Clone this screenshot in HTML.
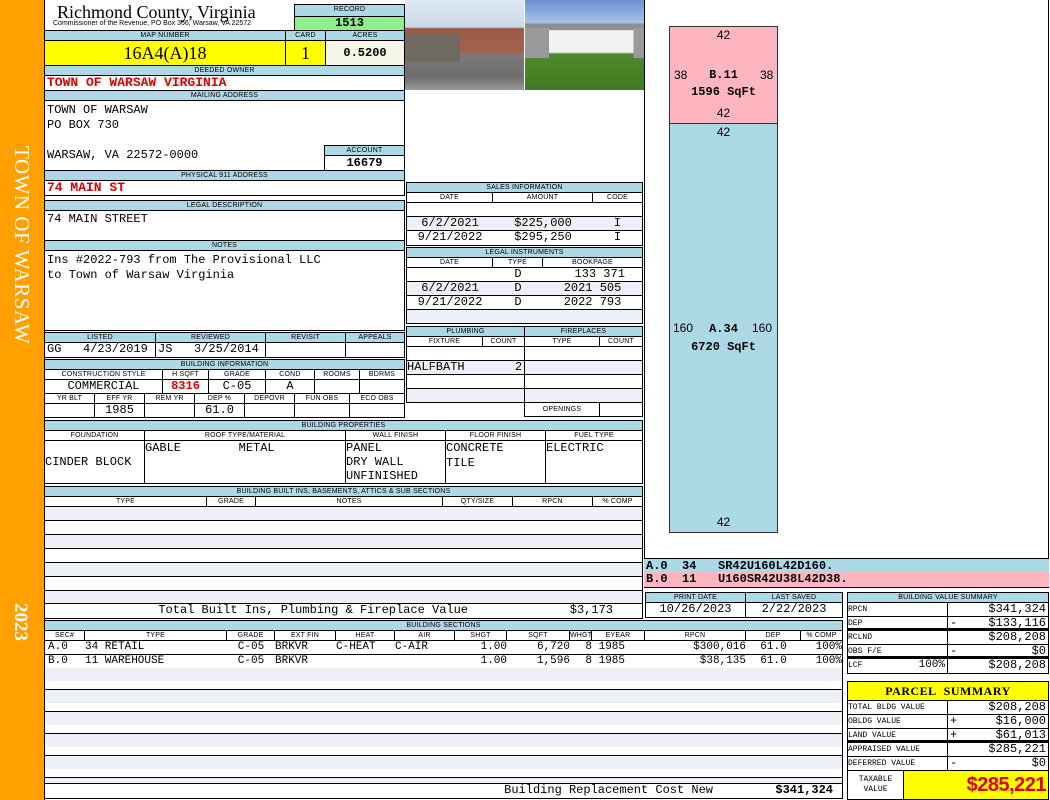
<!DOCTYPE html>
<html><head><meta charset="utf-8">
<style>
*{margin:0;padding:0;box-sizing:border-box}
body{width:1050px;height:800px;position:relative;background:#fff;overflow:hidden;font-family:"Liberation Mono",monospace;color:#000}
.a{position:absolute}
.row{position:absolute;display:flex;border:1px solid #000;background:#fff}
.row>div{border-right:1px solid #000;overflow:hidden;white-space:nowrap;flex:none}
.row>div:last-child{border-right:0;flex:1}
.hd{background:#add8e6;font:7px/9px "Liberation Sans",sans-serif;text-align:center;letter-spacing:.2px}
.m{font:12px/13px "Liberation Mono",monospace}
.s{font:11px/13px "Liberation Mono",monospace}
.c{text-align:center}.r{text-align:right}
.z{background:#eef0f8}
.red{color:#e00000;font-weight:bold}
.lbl{font:8px/13px "Liberation Mono",monospace}
</style></head><body>

<div class="a" style="left:0;top:0;width:44px;height:800px;background:#ffa000"></div>
<div class="a" style="left:9px;top:146px;writing-mode:vertical-rl;color:#fff;font:21px 'Liberation Serif',serif;letter-spacing:.5px">TOWN OF WARSAW</div>
<div class="a" style="left:9px;top:603px;writing-mode:vertical-rl;color:#fff;font:bold 19px 'Liberation Serif',serif">2023</div>
<div class="a" style="left:44px;top:0;width:1px;height:800px;background:#000"></div>

<div class="a" style="left:57px;top:2px;font:18px/20px 'Liberation Serif',serif">Richmond County, Virginia</div>
<div class="a" style="left:53px;top:20px;font:7px/8px 'Liberation Sans',sans-serif">Commissioner of the Revenue, PO Box 366, Warsaw, VA 22572</div>
<div class="row hd" style="left:294px;top:4px;width:111px;height:13px"><div>RECORD</div></div>
<div class="row" style="left:294px;top:16px;width:111px;height:15px;background:#90ee90;font:bold 12px/13px 'Liberation Mono';justify-content:center">1513</div>

<div class="row hd" style="left:44px;top:30px;width:361px;height:11px"><div style="width:241px">MAP NUMBER</div><div style="width:40px">CARD</div><div>ACRES</div></div>
<div class="row" style="left:44px;top:40px;width:361px;height:26px"><div style="width:241px;background:#ffff00;font:18px/24px 'Liberation Serif';text-align:center">16A4(A)18</div><div style="width:40px;background:#ffff00;font:18px/24px 'Liberation Serif';text-align:center">1</div><div style="background:#f6f6e6;font:bold 12px/24px 'Liberation Mono';text-align:center">0.5200</div></div>

<div class="row hd" style="left:44px;top:65px;width:361px;height:11px"><div>DEEDED OWNER</div></div>
<div class="row m red" style="left:44px;top:75px;width:361px;height:16px;padding-left:2px;font-size:13px">TOWN OF WARSAW VIRGINIA</div>
<div class="row hd" style="left:44px;top:90px;width:361px;height:11px"><div>MAILING ADDRESS</div></div>
<div class="row m" style="left:44px;top:100px;width:361px;height:71px;display:block;padding:2px 2px;line-height:15px">TOWN OF WARSAW<br>PO BOX 730<br><br>WARSAW, VA 22572-0000</div>
<div class="row hd" style="left:324px;top:145px;width:81px;height:11px"><div>ACCOUNT</div></div>
<div class="row" style="left:324px;top:155px;width:81px;height:16px;font:bold 12px/14px 'Liberation Mono';justify-content:center">16679</div>
<div class="row hd" style="left:44px;top:170px;width:361px;height:11px"><div>PHYSICAL 911 ADDRESS</div></div>
<div class="row m red" style="left:44px;top:180px;width:361px;height:16px;padding-left:2px;font-size:13px">74 MAIN ST</div>

<div class="row hd" style="left:44px;top:200px;width:361px;height:11px"><div>LEGAL DESCRIPTION</div></div>
<div class="row m" style="left:44px;top:210px;width:361px;height:31px;padding:2px">74 MAIN STREET</div>
<div class="row hd" style="left:44px;top:240px;width:361px;height:11px"><div>NOTES</div></div>
<div class="row m" style="left:44px;top:250px;width:361px;height:81px;display:block;padding:2px;line-height:15px">Ins #2022-793 from The Provisional LLC<br>to Town of Warsaw Virginia</div>

<div class="row hd" style="left:44px;top:332px;width:361px;height:11px"><div style="width:111px">LISTED</div><div style="width:110px">REVIEWED</div><div style="width:80px">REVISIT</div><div>APPEALS</div></div>
<div class="row m" style="left:44px;top:342px;width:361px;height:16px"><div style="width:111px;padding-left:2px">GG&nbsp;&nbsp;&nbsp;4/23/2019</div><div style="width:110px;padding-left:2px">JS&nbsp;&nbsp;&nbsp;3/25/2014</div><div style="width:80px"></div><div></div></div>

<div class="row hd" style="left:44px;top:359px;width:361px;height:11px"><div>BUILDING INFORMATION</div></div>
<div class="row hd" style="left:44px;top:369px;width:361px;height:11px;background:#fff"><div style="width:118px">CONSTRUCTION STYLE</div><div style="width:46px">H SQFT</div><div style="width:57px">GRADE</div><div style="width:49px">COND</div><div style="width:45px">ROOMS</div><div>BDRMS</div></div>
<div class="row m" style="left:44px;top:379px;width:361px;height:15px"><div class="c" style="width:118px">COMMERCIAL</div><div class="c red" style="width:46px">8316</div><div class="c" style="width:57px">C-05</div><div class="c" style="width:49px">A</div><div style="width:45px"></div><div></div></div>
<div class="row hd" style="left:44px;top:393px;width:361px;height:11px;background:#fff"><div style="width:50px">YR BLT</div><div style="width:50px">EFF YR</div><div style="width:50px">REM YR</div><div style="width:50px">DEP %</div><div style="width:50px">DEPOVR</div><div style="width:55px">FUN OBS</div><div>ECO OBS</div></div>
<div class="row m" style="left:44px;top:403px;width:361px;height:15px"><div style="width:50px"></div><div class="c" style="width:50px">1985</div><div style="width:50px"></div><div class="c" style="width:50px">61.0</div><div style="width:50px"></div><div style="width:55px"></div><div></div></div>

<div class="a" style="left:405px;top:0;width:119px;height:90px;background:linear-gradient(#dfe8f3 0,#c8d8ea 30%,#9b5a48 32%,#a4624f 58%,#7a7a7a 62%,#6d6d6d 85%,#999 100%)"></div>
<div class="a" style="left:405px;top:34px;width:55px;height:28px;background:#706a62"></div>
<div class="a" style="left:525px;top:0;width:119px;height:90px;background:linear-gradient(#6a8fd0 0,#a9c3e8 25%,#8e8e8e 27%,#8e8e8e 33%,#f2f2f2 34%,#f2f2f2 58%,#4f8a2e 60%,#3f7a22 100%)"></div>
<div class="a" style="left:525px;top:28px;width:119px;height:30px;background:linear-gradient(90deg,#9a9a9a 0,#9a9a9a 20%,transparent 20%,transparent 91%,#9a9a9a 91%)"></div>

<div class="row hd" style="left:406px;top:182px;width:237px;height:11px"><div>SALES INFORMATION</div></div>
<div class="row hd" style="left:406px;top:192px;width:237px;height:11px;background:#fff"><div style="width:86px">DATE</div><div style="width:100px">AMOUNT</div><div>CODE</div></div>
<div class="row m" style="left:406px;top:202px;width:237px;height:15px"></div>
<div class="row m z" style="left:406px;top:216px;width:237px;height:15px"><div class="c" style="width:86px;border:0">6/2/2021</div><div class="c" style="width:100px;border:0">$225,000</div><div class="c">I</div></div>
<div class="row m" style="left:406px;top:230px;width:237px;height:16px"><div class="c" style="width:86px;border:0">9/21/2022</div><div class="c" style="width:100px;border:0">$295,250</div><div class="c">I</div></div>

<div class="row hd" style="left:406px;top:247px;width:237px;height:11px"><div>LEGAL INSTRUMENTS</div></div>
<div class="row hd" style="left:406px;top:257px;width:237px;height:11px;background:#fff"><div style="width:86px">DATE</div><div style="width:50px">TYPE</div><div>BOOKPAGE</div></div>
<div class="row m" style="left:406px;top:267px;width:237px;height:15px"><div style="width:86px;border:0"></div><div class="c" style="width:50px;border:0">D</div><div class="c">&nbsp;&nbsp;133 371</div></div>
<div class="row m z" style="left:406px;top:281px;width:237px;height:15px"><div class="c" style="width:86px;border:0">6/2/2021</div><div class="c" style="width:50px;border:0">D</div><div class="c">2021 505</div></div>
<div class="row m" style="left:406px;top:295px;width:237px;height:15px"><div class="c" style="width:86px;border:0">9/21/2022</div><div class="c" style="width:50px;border:0">D</div><div class="c">2022 793</div></div>
<div class="row m z" style="left:406px;top:309px;width:237px;height:15px"></div>

<div class="row hd" style="left:406px;top:326px;width:237px;height:11px"><div style="width:118px">PLUMBING</div><div>FIREPLACES</div></div>
<div class="row hd" style="left:406px;top:336px;width:237px;height:11px;background:#fff"><div style="width:76px">FIXTURE</div><div style="width:42px">COUNT</div><div style="width:75px">TYPE</div><div>COUNT</div></div>
<div class="row" style="left:406px;top:346px;width:237px;height:15px"><div style="width:118px"></div><div></div></div>
<div class="row m z" style="left:406px;top:360px;width:237px;height:15px"><div style="width:118px">HALFBATH&nbsp;&nbsp;&nbsp;&nbsp;&nbsp;&nbsp;&nbsp;2</div><div></div></div>
<div class="row" style="left:406px;top:374px;width:237px;height:15px"><div style="width:118px"></div><div></div></div>
<div class="row z" style="left:406px;top:388px;width:237px;height:15px"><div style="width:118px"></div><div></div></div>
<div class="row hd" style="left:524px;top:402px;width:119px;height:15px;background:#fff;line-height:13px"><div style="width:75px">OPENINGS</div><div></div></div>

<div class="row hd" style="left:44px;top:420px;width:599px;height:11px"><div>BUILDING PROPERTIES</div></div>
<div class="row hd" style="left:44px;top:430px;width:599px;height:11px;background:#fff"><div style="width:100px">FOUNDATION</div><div style="width:201px">ROOF TYPE/MATERIAL</div><div style="width:100px">WALL FINISH</div><div style="width:100px">FLOOR FINISH</div><div>FUEL TYPE</div></div>
<div class="row m" style="left:44px;top:440px;width:599px;height:44px"><div style="width:100px;padding-top:15px">CINDER BLOCK</div><div style="width:201px;line-height:15px">GABLE&nbsp;&nbsp;&nbsp;&nbsp;&nbsp;&nbsp;&nbsp;&nbsp;METAL</div><div style="width:100px;line-height:14px">PANEL<br>DRY WALL<br>UNFINISHED</div><div style="width:100px;line-height:15px">CONCRETE<br>TILE</div><div style="line-height:15px">ELECTRIC</div></div>

<div class="row hd" style="left:44px;top:486px;width:599px;height:11px"><div>BUILDING BUILT INS, BASEMENTS, ATTICS &amp; SUB SECTIONS</div></div>
<div class="row hd" style="left:44px;top:496px;width:599px;height:11px;background:#fff"><div style="width:162px">TYPE</div><div style="width:49px">GRADE</div><div style="width:187px">NOTES</div><div style="width:70px">QTY/SIZE</div><div style="width:80px">RPCN</div><div>% COMP</div></div>
<div class="a" style="left:44px;top:506px;width:599px;height:113px;border:1px solid #000;background:repeating-linear-gradient(#eef0f8 0,#eef0f8 13px,#000 13px,#000 14px,#fff 14px,#fff 27px,#000 27px,#000 28px)"></div>
<div class="row m" style="left:44px;top:603px;width:599px;height:16px"><div style="width:423px;border:0;text-align:right">Total Built Ins, Plumbing &amp; Fireplace Value</div><div style="width:145px;border:0;text-align:right">$3,173</div><div></div></div>

<div class="a" style="left:644px;top:0;width:405px;height:559px;border:1px solid #000;border-top:0"></div>
<div class="a" style="left:669px;top:26px;width:109px;height:98px;background:#ffb6c1;border:1px solid #333"></div>
<div class="a" style="left:669px;top:123px;width:109px;height:410px;background:#add8e6;border:1px solid #333"></div>
<div class="a" style="left:669px;top:28px;width:109px;text-align:center;font:12px 'Liberation Sans'">42</div>
<div class="a" style="left:674px;top:68px;font:12px 'Liberation Sans'">38</div>
<div class="a" style="left:760px;top:68px;font:12px 'Liberation Sans'">38</div>
<div class="a" style="left:669px;top:67px;width:109px;text-align:center;font:bold 12px/17px 'Liberation Mono'">B.11<br>1596 SqFt</div>
<div class="a" style="left:669px;top:106px;width:109px;text-align:center;font:12px 'Liberation Sans'">42</div>
<div class="a" style="left:669px;top:125px;width:109px;text-align:center;font:12px 'Liberation Sans'">42</div>
<div class="a" style="left:673px;top:321px;font:12px 'Liberation Sans'">160</div>
<div class="a" style="left:752px;top:321px;font:12px 'Liberation Sans'">160</div>
<div class="a" style="left:669px;top:320px;width:109px;text-align:center;font:bold 12px/18px 'Liberation Mono'">A.34<br>6720 SqFt</div>
<div class="a" style="left:669px;top:515px;width:109px;text-align:center;font:12px 'Liberation Sans'">42</div>
<div class="a" style="left:644px;top:558px;width:405px;height:15px;background:#add8e6;border-top:1px solid #000;font:bold 12px/14px 'Liberation Mono';padding-left:2px;white-space:pre">A.0  34   SR42U160L42D160.</div>
<div class="a" style="left:644px;top:572px;width:405px;height:16px;background:#ffb6c1;border-bottom:1px solid #000;font:bold 12px/14px 'Liberation Mono';padding-left:2px;white-space:pre">B.0  11   U160SR42U38L42D38.</div>

<div class="row hd" style="left:645px;top:592px;width:198px;height:11px"><div style="width:100px">PRINT DATE</div><div>LAST SAVED</div></div>
<div class="row m" style="left:645px;top:602px;width:198px;height:16px"><div class="c" style="width:100px">10/26/2023</div><div class="c">2/22/2023</div></div>

<div class="row hd" style="left:44px;top:620px;width:799px;height:11px"><div>BUILDING SECTIONS</div></div>
<div class="row hd" style="left:44px;top:630px;width:799px;height:11px;background:#fff"><div style="width:40px">SEC#</div><div style="width:142px">TYPE</div><div style="width:48px">GRADE</div><div style="width:61px">EXT FIN</div><div style="width:59px">HEAT</div><div style="width:60px">AIR</div><div style="width:52px">SHGT</div><div style="width:63px">SQFT</div><div style="width:22px">WHGT</div><div style="width:53px">EYEAR</div><div style="width:101px">RPCN</div><div style="width:55px">DEP</div><div>% COMP</div></div>
<div class="row s" style="left:44px;top:640px;width:799px;height:15px"><div style="width:40px;border:0;padding-left:3px">A.0</div><div style="width:142px;border:0">34 RETAIL</div><div style="width:48px;border:0" class="c">C-05</div><div style="width:61px;border:0">BRKVR</div><div style="width:59px;border:0">C-HEAT</div><div style="width:60px;border:0">C-AIR</div><div style="width:52px;border:0" class="r">1.00</div><div style="width:63px;border:0" class="r">6,720</div><div style="width:22px;border:0" class="r">8</div><div style="width:53px;border:0">&nbsp;1985</div><div style="width:101px;border:0" class="r">$300,016</div><div style="width:55px;border:0" class="c">61.0</div><div class="r">100%</div></div>
<div class="row s" style="left:44px;top:654px;width:799px;height:15px"><div style="width:40px;border:0;padding-left:3px">B.0</div><div style="width:142px;border:0">11 WAREHOUSE</div><div style="width:48px;border:0" class="c">C-05</div><div style="width:61px;border:0">BRKVR</div><div style="width:59px;border:0"></div><div style="width:60px;border:0"></div><div style="width:52px;border:0" class="r">1.00</div><div style="width:63px;border:0" class="r">1,596</div><div style="width:22px;border:0" class="r">8</div><div style="width:53px;border:0">&nbsp;1985</div><div style="width:101px;border:0" class="r">$38,135</div><div style="width:55px;border:0" class="c">61.0</div><div class="r">100%</div></div>
<div class="a" style="left:44px;top:668px;width:799px;height:116px;border:1px solid #000;border-top:0;background:repeating-linear-gradient(#eef0f8 0,#eef0f8 13px,#fff 13px,#fff 21px,#000 21px,#000 22px)"></div>
<div class="row m" style="left:44px;top:783px;width:799px;height:16px"><div style="width:668px;border:0;text-align:right">Building Replacement Cost New</div><div style="width:120px;border:0;font-weight:bold;text-align:right">$341,324</div><div></div></div>

<div class="row hd" style="left:847px;top:592px;width:202px;height:11px"><div>BUILDING VALUE SUMMARY</div></div>
<div class="row" style="left:847px;top:602px;width:202px;height:15px"><div class="lbl" style="width:100px">RPCN</div><div class="m r" style="padding-right:2px">$341,324</div></div>
<div class="row" style="left:847px;top:616px;width:202px;height:15px;border-bottom-width:3px"><div class="lbl" style="width:100px">DEP</div><div class="m" style="display:flex;justify-content:space-between;padding:0 2px"><span>-</span><span>$133,116</span></div></div>
<div class="row" style="left:847px;top:630px;width:202px;height:15px"><div class="lbl" style="width:100px">RCLND</div><div class="m r" style="padding-right:2px">$208,208</div></div>
<div class="row" style="left:847px;top:644px;width:202px;height:15px;border-bottom-width:3px"><div class="lbl" style="width:100px">OBS F/E</div><div class="m" style="display:flex;justify-content:space-between;padding:0 2px"><span>-</span><span>$0</span></div></div>
<div class="row" style="left:847px;top:658px;width:202px;height:16px"><div class="lbl" style="width:100px;display:flex;justify-content:space-between;padding-right:2px"><span>LCF</span><span style="font-size:11px">100%</span></div><div class="m r" style="padding-right:2px">$208,208</div></div>

<div class="row" style="left:847px;top:681px;width:202px;height:20px;background:#ffff00;justify-content:center;font:bold 12px/18px 'Liberation Serif',serif;letter-spacing:.5px">PARCEL&nbsp; SUMMARY</div>
<div class="row" style="left:847px;top:700px;width:202px;height:15px"><div class="lbl" style="width:100px">TOTAL BLDG VALUE</div><div class="m r" style="padding-right:2px">$208,208</div></div>
<div class="row" style="left:847px;top:714px;width:202px;height:15px"><div class="lbl" style="width:100px">OBLDG VALUE</div><div class="m" style="display:flex;justify-content:space-between;padding:0 2px"><span>+</span><span>$16,000</span></div></div>
<div class="row" style="left:847px;top:728px;width:202px;height:15px;border-bottom-width:3px"><div class="lbl" style="width:100px">LAND VALUE</div><div class="m" style="display:flex;justify-content:space-between;padding:0 2px"><span>+</span><span>$61,013</span></div></div>
<div class="row" style="left:847px;top:742px;width:202px;height:15px"><div class="lbl" style="width:100px">APPRAISED VALUE</div><div class="m r" style="padding-right:2px">$285,221</div></div>
<div class="row" style="left:847px;top:756px;width:202px;height:15px"><div class="lbl" style="width:100px">DEFERRED VALUE</div><div class="m" style="display:flex;justify-content:space-between;padding:0 2px"><span>-</span><span>$0</span></div></div>
<div class="row" style="left:847px;top:770px;width:202px;height:30px"><div style="width:56px;font:8px/10px 'Liberation Mono';text-align:center;padding-top:4px">TAXABLE<br>VALUE</div><div style="background:#ffff00;color:#e00000;font:bold 20px/28px 'Liberation Sans',sans-serif;text-align:right;padding-right:2px;letter-spacing:-.5px">$285,221</div></div>

</body></html>
